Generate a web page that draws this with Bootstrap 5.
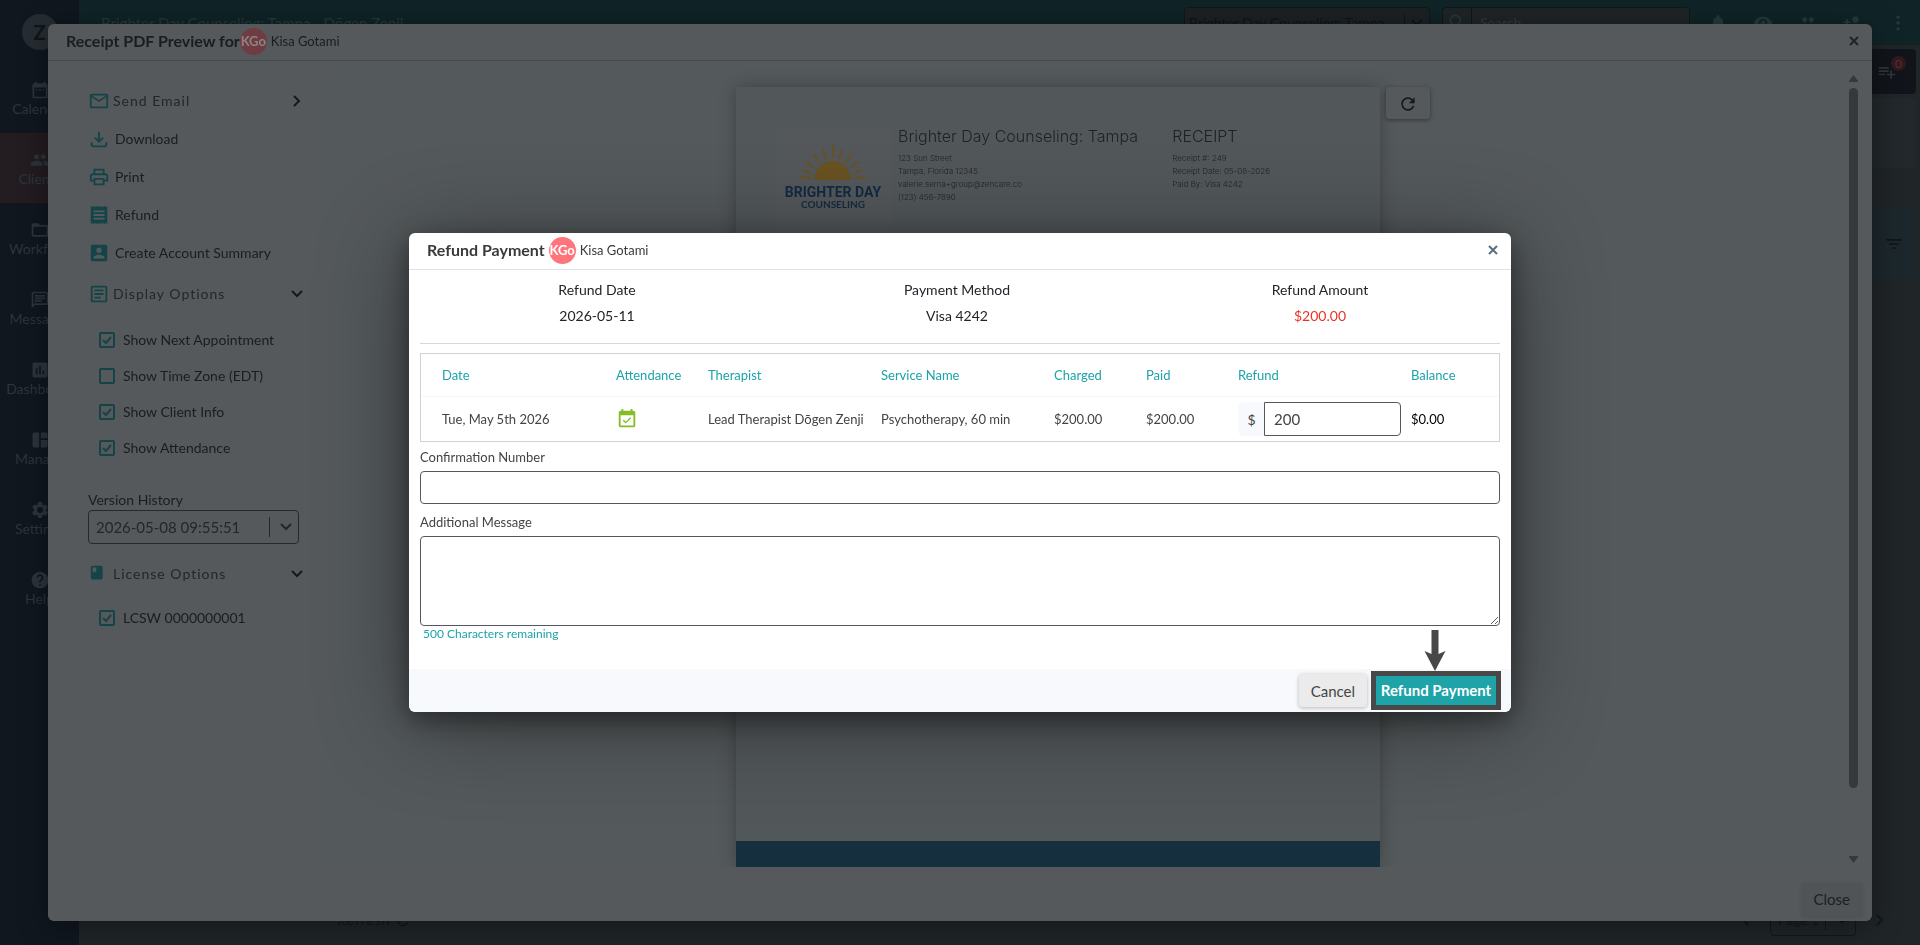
<!DOCTYPE html>
<html lang="en">
<head>
<meta charset="utf-8">
<meta name="viewport" content="width=device-width, initial-scale=1">
<title>Refund Payment</title>
<link href="https://cdn.jsdelivr.net/npm/bootstrap@5.3.0/dist/css/bootstrap.min.css" rel="stylesheet">
<style>
  :root { --teal: #1da3a8; --teal-dim: #144448; --ink: #191d20; }
  body { font-family: Lato, "Open Sans", sans-serif; font-size: 14px; line-height: 20px; background: #202528; color: #212529; overflow: hidden; }
  .ico { width: 20px; height: 20px; fill: currentColor; flex: none; }
  .ico-22 { width: 22px; height: 22px; }
  .ico-16 { width: 16px; height: 16px; }
  .ico-12 { width: 12px; height: 12px; }
  .spaced { letter-spacing: 1px; }

  /* application frame */
  .app-shell { height: 100vh; }
  .side-rail { width: 79px; background: #10171f; color: #2d353c; flex: none; }
  .rail-logo { width: 36px; height: 36px; background: #262d32; color: #0f1519; font: 700 20px/36px Lato, sans-serif; margin: 14px auto 13px; }
  .rail-item { height: 70px; padding-top: 17px; color: inherit; font-size: 14px; line-height: 18px; }
  .rail-item.current { background: #231c21; color: #2c353b; }
  .top-bar { height: 45px; background: #102427; color: #253a3d; padding: 0 12px 0 22px; }
  .top-title { font-size: 15px; }
  .top-select { width: 246px; height: 32px; background: #1c2224; border: 1px solid #11171a; color: #0e1416; font-size: 14px; padding: 0 4px; }
  .top-search { width: 248px; height: 32px; background: #1f2527; border: 1px solid #11171a; margin: 0 18px 0 4px; }
  .top-search input { background: none; border: 0; border-left: 1px solid #11171a; color: #343a3c; width: 0; }
  .top-search input::placeholder { color: #34393b; }
  .top-icons { gap: 25px; }
  .cart-bar { height: 45px; background: #11151b; color: #2f363a; border-radius: 4px; padding-right: 19px; }
  .count-dot { width: 15px; height: 15px; font-size: 12px; line-height: 15px; background: #35181d; color: #4d3438; top: -5px; left: 14px; }
  .blank-panel { height: 70px; background: #22282b; border-radius: 4px; }
  .filter-bar { height: 72px; background: #1c272c; color: #0f1518; padding-right: 12px; }
  .page-foot { padding: 0 28px 9px 258px; color: #11171a; }
  .page-box { width: 86px; height: 32px; border: 1px solid #11171a; }
  .page-box select { width: 54px; background: transparent; border: 0; color: #11171a; padding: 0 0 0 7px; appearance: none; }

  /* dialogs */
  .modal-content { border: 0; border-radius: 6px; }
  .modal-header { height: 37px; padding: 0 12px 2px 18px; }
  .modal-header h2 { font-size: 16px; line-height: 20px; }
  .face { width: 27px; height: 27px; line-height: 27px; font-size: 13px; font-weight: 700; background: #ff757c; color: #fff; text-align: center; }
  .who { font-size: 13px; }
  .x-btn { border: 0; background: none; color: #56707f; padding: 0; line-height: 0; }

  .preview-dialog { max-width: none; height: calc(100vh - 48px); margin: 24px 48px; }
  .preview-dialog .modal-content { height: 100%; background: #56595b; color: var(--ink); box-shadow: 0 4px 30px #0006; }
  .preview-dialog .modal-header { border-color: #474b4d; }
  .preview-dialog .face { background: #6f3d41; color: #8b8486; }
  .preview-dialog .x-btn { color: #1c262c; }
  .preview-dialog .modal-footer { height: 44px; background: #55595c; padding: 0 10px; border: 0; }
  .tools { width: 281px; padding: 21px 17px 0 40px; flex: none; }
  .tool-row { height: 38px; width: 100%; background: none; border: 0; padding: 0; color: inherit; text-decoration: none; gap: 5px; }
  .tool-row .ico { color: var(--teal-dim); }
  .tool-row.group { color: #22272a; padding-right: 7px; gap: 3px; }
  .tool-row.tall { height: 44px; }
  .tool-row .chev { color: #15191c; }
  .ticks { padding-top: 6px; }
  .tick-row { height: 36px; padding-left: 11px; gap: 8px; }
  .tick { appearance: none; width: 16px; height: 16px; margin: 0; border: 2px solid var(--teal-dim); border-radius: 2px; }
  .tick:checked { background: url("data:image/svg+xml,%3Csvg xmlns='http://www.w3.org/2000/svg' viewBox='0 0 12 12'%3E%3Cpath d='M2 6l3 3 5-6' fill='none' stroke='%23144448' stroke-width='2'/%3E%3C/svg%3E") center/12px no-repeat; }
  .version-box { border: 1px solid #25292d; border-radius: 4px; height: 34px; width: 211px; color: #22272a; }
  .version-box select { appearance: none; background: none; border: 0; color: #22272a; font-size: 15px; padding: 0 0 0 7px; width: 180px; }
  .bar-mark { width: 1px; height: 20px; background: #22272a; }
  .top-select .bar-mark, .page-box .bar-mark { background: #11171a; }
  .viewer { background: #54595b; margin: 8px 0 10px; min-width: 0; overflow: hidden; padding-top: 18px; gap: 6px; }
  .sheet { width: 644px; background: #525759; box-shadow: 0 0 16px #0004; color: #1d2226; font-family: Inter, sans-serif; }
  .sheet-head { padding: 39px 62px 0 40px; }
  .brand-box { width: 114px; height: 120px; background: #54585a; }
  .sheet h3 { font-size: 16px; line-height: 20px; font-weight: 300; margin: 0 0 6px; }
  .fine { font-size: 8px; line-height: 13px; font-weight: 300; }
  .sheet-foot { height: 26px; background: #162f3e; }
  .redo { width: 44px; height: 32px; border: 0; border-radius: 4px; background: #56595b; box-shadow: 0 1px 4px #0006; color: #15191c; padding: 0; }
  .scroll-rail { width: 9px; margin: 14px 14px 14px 12px; color: #35393c; }
  .scroll-rail .thumb { background: #35393c; border-radius: 5px; flex: 700; margin-top: 6px; }
  .scroll-rail .rest { flex: 68; }
  .grey-btn { height: 33px; border: 0; border-radius: 4px; padding: 0 12px; background: #ebebeb; color: #444; font-size: 15px; box-shadow: 0 1px 4px #0004; }
  .preview-dialog .grey-btn { background: #515456; color: #1c2023; box-shadow: 0 1px 4px #0002; }

  .refund-dialog { max-width: 1102px; }
  .refund-dialog .modal-content { box-shadow: 0 8px 24px #0006, 0 10px 90px #0006; }
  .refund-dialog .modal-header { border-color: #dee2e6; color: #3a3a3a; }
  .refund-dialog .modal-body { padding: 10px 11px 0; }
  .refund-dialog .modal-footer { height: 43px; padding: 0 10px; gap: 4px; background: #f8f9fc; border: 0; }
  .summary { border-bottom: 1px solid #d5d8dc; height: 64px; row-gap: 6px; margin-bottom: 9px; }
  .lead-in { padding-right: 6px; }
  .minus { color: #ea3323; }
  .lines { border: 1px solid #d0d3d3; table-layout: fixed; width: 100%; border-collapse: separate; border-spacing: 0; font-size: 13px; color: #444; }
  .lines th { height: 43px; color: var(--teal); font-weight: 400; border-bottom: 1px solid #f6f7f7; padding: 0; }
  .lines td { height: 44px; padding: 0; white-space: nowrap; }
  .lines th:first-child, .lines td:first-child { padding-left: 21px; }
  .c-date { width: 195px; } .c-slim { width: 92px; } .c-wide { width: 173px; } .c-last { width: 88px; }
  .kept { color: #86bc25; }
  .money { width: 163px; height: 34px; }
  .money .input-group-text { width: 27px; background: #f8f9fc; border: 0; padding: 0; justify-content: center; font-size: 14px; color: #444; }
  .money .form-control { border: 1px solid #57585f; border-radius: 0 4px 4px 0; font-size: 15px; color: #444; padding: 0 9px; }
  .form-label { font-size: 13px; line-height: 20px; margin: 5px 0 4px; color: #444; }
  .edge { border: 1px solid #57585f; border-radius: 4px; height: 33px; }
  textarea.edge { height: 90px; }
  .remain { font-size: 12px; line-height: 16px; color: var(--teal); padding-left: 3px; height: 43px; }
  .ring { border: 5px solid #484848; position: relative; }
  .ring .btn { height: 29px; width: 120px; border-radius: 0; background: var(--teal); color: #fff; font-size: 15px; font-weight: 700; padding: 0; line-height: 29px; border: 0; }
  .pointer { position: absolute; left: 50%; bottom: 100%; margin: 0 0 5px -12px; width: 22px; height: 41px; fill: #484848; }
</style>
</head>
<body>
<svg class="d-none" aria-hidden="true">
  <symbol id="i-cal" viewBox="0 0 24 24"><path d="M9 11H7v2h2v-2zm4 0h-2v2h2v-2zm4 0h-2v2h2v-2zm2-7h-1V2h-2v2H8V2H6v2H5c-1.11 0-1.99.9-1.99 2L3 20c0 1.1.89 2 2 2h14c1.1 0 2-.9 2-2V6c0-1.1-.9-2-2-2zm0 16H5V9h14v11z"/></symbol>
  <symbol id="i-people" viewBox="0 0 24 24"><path d="M16 11c1.66 0 2.99-1.34 2.99-3S17.66 5 16 5c-1.66 0-3 1.34-3 3s1.34 3 3 3zm-8 0c1.66 0 2.99-1.34 2.99-3S9.66 5 8 5C6.34 5 5 6.34 5 8s1.34 3 3 3zm0 2c-2.33 0-7 1.17-7 3.5V19h14v-2.5c0-2.33-4.67-3.5-7-3.5zm8 0c-.29 0-.62.02-.97.05 1.16.84 1.97 1.97 1.97 3.45V19h6v-2.5c0-2.33-4.67-3.5-7-3.5z"/></symbol>
  <symbol id="i-folder" viewBox="0 0 24 24"><path d="M20 6h-8l-2-2H4c-1.1 0-1.99.9-1.99 2L2 18c0 1.1.9 2 2 2h16c1.1 0 2-.9 2-2V8c0-1.1-.9-2-2-2zm0 12H4V8h16v10z"/></symbol>
  <symbol id="i-msg" viewBox="0 0 24 24"><path d="M4 4h16v12H5.17L4 17.17V4m0-2c-1.1 0-1.99.9-1.99 2L2 22l4-4h14c1.1 0 2-.9 2-2V4c0-1.1-.9-2-2-2H4zm2 10h8v2H6v-2zm0-3h12v2H6V9zm0-3h12v2H6V6z"/></symbol>
  <symbol id="i-chart" viewBox="0 0 24 24"><path d="M19 3H5c-1.1 0-2 .9-2 2v14c0 1.1.9 2 2 2h14c1.1 0 2-.9 2-2V5c0-1.1-.9-2-2-2zM9 17H7v-7h2v7zm4 0h-2V7h2v10zm4 0h-2v-4h2v4z"/></symbol>
  <symbol id="i-dash" viewBox="0 0 24 24"><path d="M11 21H5c-1.1 0-2-.9-2-2V5c0-1.1.9-2 2-2h6v18zm2 0h6c1.1 0 2-.9 2-2v-7h-8v9zm8-11V5c0-1.1-.9-2-2-2h-6v7h8z"/></symbol>
  <symbol id="i-gear" viewBox="0 0 24 24"><path d="M19.14 12.94c.04-.3.06-.61.06-.94 0-.32-.02-.64-.07-.94l2.03-1.58c.18-.14.23-.41.12-.61l-1.92-3.32c-.12-.22-.37-.29-.59-.22l-2.39.96c-.5-.38-1.03-.7-1.62-.94l-.36-2.54c-.04-.24-.24-.41-.48-.41h-3.84c-.24 0-.43.17-.47.41l-.36 2.54c-.59.24-1.13.57-1.62.94l-2.39-.96c-.22-.08-.47 0-.59.22L2.74 8.87c-.12.21-.08.47.12.61l2.03 1.58c-.05.3-.09.63-.09.94s.02.64.07.94l-2.03 1.58c-.18.14-.23.41-.12.61l1.92 3.32c.12.22.37.29.59.22l2.39-.96c.5.38 1.03.7 1.62.94l.36 2.54c.05.24.24.41.48.41h3.84c.24 0 .44-.17.47-.41l.36-2.54c.59-.24 1.13-.56 1.62-.94l2.39.96c.22.08.47 0 .59-.22l1.92-3.32c.12-.22.07-.47-.12-.61l-2.01-1.58zM12 15.6c-1.98 0-3.6-1.62-3.6-3.6s1.62-3.6 3.6-3.6 3.6 1.62 3.6 3.6-1.62 3.6-3.6 3.6z"/></symbol>
  <symbol id="i-help" viewBox="0 0 24 24"><path d="M12 2C6.48 2 2 6.48 2 12s4.48 10 10 10 10-4.48 10-10S17.52 2 12 2zm1 17h-2v-2h2v2zm2.07-7.75l-.9.92C13.45 12.9 13 13.5 13 15h-2v-.5c0-1.1.45-2.1 1.17-2.83l1.24-1.26c.37-.36.59-.86.59-1.41 0-1.1-.9-2-2-2s-2 .9-2 2H8c0-2.21 1.79-4 4-4s4 1.79 4 4c0 .88-.36 1.68-.93 2.25z"/></symbol>
  <symbol id="i-mail" viewBox="0 0 24 24"><path d="M22 6c0-1.1-.9-2-2-2H4c-1.1 0-2 .9-2 2v12c0 1.1.9 2 2 2h16c1.1 0 2-.9 2-2V6zm-2 0l-8 5-8-5h16zm0 12H4V8l8 5 8-5v10z"/></symbol>
  <symbol id="i-down" viewBox="0 0 24 24"><path d="M12 4v11M7.5 10.500L12 15l4.500-4.500M4 15.500V18a2 2 0 002 2h12a2 2 0 002-2v-2.500" fill="none" stroke="currentColor" stroke-width="2"/></symbol>
  <symbol id="i-print" viewBox="0 0 24 24"><path d="M19 8h-1V3H6v5H5c-1.660 0-3 1.340-3 3v6h4v4h12v-4h4v-6c0-1.660-1.340-3-3-3zM8 5h8v3H8V5zm8 12v2H8v-4h8v2zm2-2v-2H6v2H4v-4c0-.55.45-1 1-1h14c.55 0 1 .45 1 1v4h-2z"/></symbol>
  <symbol id="i-receipt" viewBox="0 0 24 24"><path d="M18 17H6v-2h12v2zm0-4H6v-2h12v2zm0-4H6V7h12v2zM3 22l1.500-1.500L6 22l1.500-1.500L9 22l1.500-1.500L12 22l1.500-1.500L15 22l1.500-1.500L18 22l1.500-1.500L21 22V2l-1.500 1.500L18 2l-1.500 1.500L15 2l-1.500 1.500L12 2l-1.500 1.500L9 2 7.500 3.500 6 2 4.500 3.500 3 2v20z"/></symbol>
  <symbol id="i-account" viewBox="0 0 24 24"><path d="M3 5v14c0 1.100.89 2 2 2h14c1.100 0 2-.9 2-2V5c0-1.100-.9-2-2-2H5c-1.110 0-2 .9-2 2zm12 4c0 1.660-1.340 3-3 3s-3-1.340-3-3 1.340-3 3-3 3 1.340 3 3zm-9 8c0-2 4-3.100 6-3.100s6 1.100 6 3.100v1H6v-1z"/></symbol>
  <symbol id="i-article" viewBox="0 0 24 24"><path d="M19 5v14H5V5h14m0-2H5c-1.100 0-2 .9-2 2v14c0 1.100.9 2 2 2h14c1.100 0 2-.9 2-2V5c0-1.100-.9-2-2-2zM14 17H7v-2h7v2zm3-4H7v-2h10v2zm0-4H7V7h10v2z"/></symbol>
  <symbol id="i-book" viewBox="0 0 24 24"><path fill-rule="evenodd" d="M14 3H5a2 2 0 00-2 2v11a2 2 0 002 2h9a2 2 0 002-2V5a2 2 0 00-2-2zM5 5h4v6l-2-2-2 2z"/></symbol>
  <symbol id="i-cart" viewBox="0 0 24 24"><path d="M14 10H2v2h12v-2zm0-4H2v2h12V6zm4 8v-4h-2v4h-4v2h4v4h2v-4h4v-2h-4zM2 16h8v-2H2v2z"/></symbol>
  <symbol id="i-filter" viewBox="0 0 24 24"><path d="M10 18h4v-2h-4v2zM3 6v2h18V6H3zm3 7h12v-2H6v2z"/></symbol>
  <symbol id="i-redo" viewBox="0 0 24 24"><path d="M17.650 6.350C16.200 4.900 14.210 4 12 4c-4.420 0-7.990 3.580-7.990 8s3.570 8 7.990 8c3.730 0 6.840-2.550 7.730-6h-2.080c-.82 2.330-3.040 4-5.650 4-3.310 0-6-2.690-6-6s2.690-6 6-6c1.660 0 3.140.69 4.220 1.780L13 11h7V4l-2.350 2.350z"/></symbol>
  <symbol id="i-eye" viewBox="0 0 24 24"><path d="M12 4.500C7 4.500 2.730 7.610 1 12c1.730 4.390 6 7.500 11 7.500s9.270-3.110 11-7.500c-1.730-4.390-6-7.500-11-7.500zM12 17c-2.760 0-5-2.240-5-5s2.240-5 5-5 5 2.240 5 5-2.240 5-5 5zm0-8c-1.660 0-3 1.340-3 3s1.340 3 3 3 3-1.340 3-3-1.340-3-3-3z"/></symbol>
  <symbol id="i-bell" viewBox="0 0 24 24"><path d="M12 22c1.100 0 2-.9 2-2h-4c0 1.100.89 2 2 2zm6-6v-5c0-3.070-1.640-5.640-4.500-6.320V4c0-.83-.67-1.500-1.500-1.500s-1.500.67-1.500 1.500v.68C7.630 5.360 6 7.920 6 11v5l-2 2v1h16v-1l-2-2z"/></symbol>
  <symbol id="i-add" viewBox="0 0 24 24"><path d="M15 12c2.210 0 4-1.790 4-4s-1.790-4-4-4-4 1.790-4 4 1.790 4 4 4zm-9-2V7H4v3H1v2h3v3h2v-3h3v-2H6zm9 4c-2.670 0-8 1.340-8 4v2h16v-2c0-2.660-5.330-4-8-4z"/></symbol>
  <symbol id="i-dots" viewBox="0 0 24 24"><circle cx="12" cy="5" r="2"/><circle cx="12" cy="12" r="2"/><circle cx="12" cy="19" r="2"/></symbol>
  <symbol id="i-search" viewBox="0 0 24 24"><path d="M10 4a6 6 0 100 12 6 6 0 000-12zM15 15l6 6" fill="none" stroke="currentColor" stroke-width="2"/></symbol>
  <symbol id="i-done" viewBox="0 0 24 24"><path d="M16.530 11.060L15.470 10l-4.880 4.880-2.120-2.120-1.060 1.060L10.590 17l5.940-5.940zM19 3h-1V1h-2v2H8V1H6v2H5c-1.110 0-1.990.9-1.990 2L3 19c0 1.100.89 2 2 2h14c1.100 0 2-.9 2-2V5c0-1.100-.9-2-2-2zm0 16H5V8h14v11z"/></symbol>
  <symbol id="i-chev-d" viewBox="0 0 16 16"><path d="M3.500 5.500L8 10l4.500-4.500" fill="none" stroke="currentColor" stroke-width="2" stroke-linecap="round"/></symbol>
  <symbol id="i-chev-r" viewBox="0 0 16 16"><path d="M5.500 3.500L10 8l-4.500 4.500" fill="none" stroke="currentColor" stroke-width="2" stroke-linecap="round"/></symbol>
  <symbol id="i-chev-l" viewBox="0 0 16 16"><path d="M10 3.500L5.500 8l4.500 4.500" fill="none" stroke="currentColor" stroke-width="2" stroke-linecap="round"/></symbol>
  <symbol id="i-x" viewBox="0 0 12 12"><path d="M2 2l8 8M10 2l-8 8" fill="none" stroke="currentColor" stroke-width="2"/></symbol>
</svg>

<div class="app-shell d-flex">
  <nav class="side-rail text-center">
    <div class="rail-logo rounded-circle">Z</div>
    <a href="#" class="rail-item d-flex flex-column align-items-center text-decoration-none"><svg class="ico"><use href="#i-cal"/></svg>Calendar</a>
    <a href="#" class="rail-item current d-flex flex-column align-items-center text-decoration-none"><svg class="ico"><use href="#i-people"/></svg>Clients</a>
    <a href="#" class="rail-item d-flex flex-column align-items-center text-decoration-none"><svg class="ico"><use href="#i-folder"/></svg>Workflow</a>
    <a href="#" class="rail-item d-flex flex-column align-items-center text-decoration-none"><svg class="ico"><use href="#i-msg"/></svg>Messages</a>
    <a href="#" class="rail-item d-flex flex-column align-items-center text-decoration-none"><svg class="ico"><use href="#i-chart"/></svg>Dashboard</a>
    <a href="#" class="rail-item d-flex flex-column align-items-center text-decoration-none"><svg class="ico"><use href="#i-dash"/></svg>Manage</a>
    <a href="#" class="rail-item d-flex flex-column align-items-center text-decoration-none"><svg class="ico"><use href="#i-gear"/></svg>Settings</a>
    <a href="#" class="rail-item d-flex flex-column align-items-center text-decoration-none"><svg class="ico"><use href="#i-help"/></svg>Help</a>
  </nav>
  <div class="flex-grow-1 d-flex flex-column">
    <header class="top-bar d-flex align-items-center">
      <div class="top-title me-auto">Brighter Day Counseling: Tampa - Dōgen Zenji</div>
      <div class="top-select d-flex align-items-center rounded-1 me-2"><span class="me-auto">Brighter Day Counseling: Tampa</span><span class="bar-mark me-1"></span><svg class="ico ico-16"><use href="#i-chev-d"/></svg></div>
      <div class="top-search d-flex align-items-stretch rounded-1"><svg class="ico ms-1 me-1 mt-1"><use href="#i-search"/></svg><input class="flex-grow-1 px-2" type="text" placeholder="Search" aria-label="Search"></div>
      <div class="top-icons d-flex">
        <svg class="ico"><use href="#i-bell"/></svg><svg class="ico"><use href="#i-eye"/></svg><svg class="ico"><use href="#i-people"/></svg><svg class="ico"><use href="#i-add"/></svg><svg class="ico"><use href="#i-dots"/></svg>
      </div>
    </header>
    <main class="flex-grow-1 d-flex flex-column pe-1 pt-1">
      <div class="cart-bar d-flex align-items-center justify-content-end mb-1"><span class="position-relative"><svg class="ico"><use href="#i-cart"/></svg><span class="count-dot rounded-circle position-absolute text-center">0</span></span></div>
      <div class="blank-panel mb-4"></div>
      <div class="filter-bar d-flex align-items-center justify-content-end mt-3"><svg class="ico"><use href="#i-filter"/></svg></div>
      <div class="page-foot d-flex align-items-center mt-auto">
        <span class="spaced me-auto">Refresh <svg class="ico ico-16"><use href="#i-redo"/></svg></span>
        <svg class="ico ico-16 me-3"><use href="#i-chev-l"/></svg>
        <div class="page-box rounded-1 d-flex align-items-center"><select aria-label="Page"><option>Page 1</option></select><span class="bar-mark me-1"></span><svg class="ico ico-16 ms-1"><use href="#i-chev-d"/></svg></div>
        <svg class="ico ico-16 ms-3"><use href="#i-chev-r"/></svg>
      </div>
    </main>
  </div>
</div>

<div class="modal d-block">
  <div class="modal-dialog preview-dialog">
    <div class="modal-content overflow-hidden">
      <div class="modal-header">
        <h2 class="m-0 fw-bold">Receipt PDF Preview for</h2>
        <span class="face rounded-circle me-1">KGo</span><span class="who me-auto">Kisa Gotami</span>
        <button class="x-btn" aria-label="Close preview"><svg class="ico ico-12"><use href="#i-x"/></svg></button>
      </div>
      <div class="modal-body p-0 d-flex overflow-hidden">
        <div class="tools">
          <button class="tool-row group d-flex align-items-center"><svg class="ico ico-22"><use href="#i-mail"/></svg><span class="spaced me-auto">Send Email</span><svg class="ico ico-16 chev"><use href="#i-chev-r"/></svg></button>
          <a href="#" class="tool-row d-flex align-items-center"><svg class="ico ico-22"><use href="#i-down"/></svg>Download</a>
          <a href="#" class="tool-row d-flex align-items-center"><svg class="ico ico-22"><use href="#i-print"/></svg>Print</a>
          <a href="#" class="tool-row d-flex align-items-center"><svg class="ico ico-22"><use href="#i-receipt"/></svg>Refund</a>
          <a href="#" class="tool-row d-flex align-items-center"><svg class="ico ico-22"><use href="#i-account"/></svg>Create Account Summary</a>
          <button class="tool-row group tall d-flex align-items-center"><svg class="ico ico-22"><use href="#i-article"/></svg><span class="spaced me-auto">Display Options</span><svg class="ico ico-16 chev"><use href="#i-chev-d"/></svg></button>
          <div class="ticks">
            <label class="tick-row d-flex align-items-center"><input class="tick" type="checkbox" checked>Show Next Appointment</label>
            <label class="tick-row d-flex align-items-center"><input class="tick" type="checkbox">Show Time Zone (EDT)</label>
            <label class="tick-row d-flex align-items-center"><input class="tick" type="checkbox" checked>Show Client Info</label>
            <label class="tick-row d-flex align-items-center"><input class="tick" type="checkbox" checked>Show Attendance</label>
          </div>
          <label for="version" class="d-block mt-4">Version History</label>
          <div class="version-box d-flex align-items-center">
            <select id="version"><option>2026-05-08 09:55:51</option></select><span class="bar-mark"></span><svg class="ico ico-16 ms-2"><use href="#i-chev-d"/></svg>
          </div>
          <button class="tool-row group tall d-flex align-items-center mt-2"><svg class="ico ico-22"><use href="#i-book"/></svg><span class="spaced me-auto">License Options</span><svg class="ico ico-16 chev"><use href="#i-chev-d"/></svg></button>
          <label class="tick-row d-flex align-items-center mt-1"><input class="tick" type="checkbox" checked>LCSW 0000000001</label>
        </div>
        <div class="viewer flex-grow-1 d-flex justify-content-center">
          <div class="sheet d-flex flex-column justify-content-between">
            <div class="sheet-head d-flex">
              <svg class="brand-box" viewBox="0 0 114 120" role="img" aria-label="Brighter Day Counseling">
                <path d="M38 54a18.500 19 0 0137 0z" fill="#695222"/>
                <path d="M57 20v11M47 24l3 8M66 24l-3 8M38 29l5 7M75 29l-5 7M31 36l6 5M82 36l-6 5M27 44l7 3M86 44l-7 3M25 51l9 1M89 51l-9 1" stroke="#695222" stroke-width="2" stroke-linecap="round"/>
                <text x="57" y="71" text-anchor="middle" font-family="Liberation Sans Narrow, Roboto, sans-serif" font-weight="700" font-size="14" fill="#122a42">BRIGHTER DAY</text>
                <text x="57" y="82" text-anchor="middle" font-family="Lato, sans-serif" font-weight="700" font-size="10" fill="#122a42">COUNSELING</text>
              </svg>
              <div class="ms-2">
                <h3>Brighter Day Counseling: Tampa</h3>
                <div class="fine">123 Sun Street<br>Tampa, Florida 12345<br>valerie.serna+group@zencare.co<br>(123) 456-7890</div>
              </div>
              <div class="ms-auto pe-5">
                <h3>RECEIPT</h3>
                <div class="fine">Receipt #: 249<br>Receipt Date: 05-08-2026<br>Paid By: Visa 4242</div>
              </div>
            </div>
            <div class="sheet-foot"></div>
          </div>
          <button class="redo" aria-label="Refresh preview"><svg class="ico"><use href="#i-redo"/></svg></button>
        </div>
        <div class="scroll-rail d-flex flex-column">
          <svg width="9" height="7" fill="currentColor"><path d="M4.500 0L9 6v1H0V6z"/></svg>
          <div class="thumb"></div><div class="rest"></div>
          <svg width="9" height="7" fill="currentColor"><path d="M4.500 7L9 1V0H0v1z"/></svg>
        </div>
      </div>
      <div class="modal-footer"><button class="grey-btn m-0">Close</button></div>
    </div>
  </div>
</div>

<div class="modal d-block">
  <div class="modal-dialog modal-dialog-centered refund-dialog">
    <div class="modal-content overflow-hidden">
      <div class="modal-header">
        <h2 class="m-0 fw-bold me-1">Refund Payment</h2>
        <span class="face rounded-circle me-1">KGo</span><span class="who me-auto">Kisa Gotami</span>
        <button class="x-btn" aria-label="Close"><svg class="ico ico-12"><use href="#i-x"/></svg></button>
      </div>
      <div class="modal-body">
        <div class="summary row gx-0 text-center align-content-start">
          <div class="col-4 lead-in">Refund Date</div><div class="col-4 lead-in">Payment Method</div><div class="col-4">Refund Amount</div>
          <div class="col-4 lead-in">2026-05-11</div><div class="col-4 lead-in">Visa 4242</div><div class="col-4 minus">$200.00</div>
        </div>
        <table class="lines">
          <colgroup><col class="c-date"><col class="c-slim"><col class="c-wide"><col class="c-wide"><col class="c-slim"><col class="c-slim"><col class="c-wide"><col class="c-last"></colgroup>
          <thead><tr><th>Date</th><th>Attendance</th><th>Therapist</th><th>Service Name</th><th>Charged</th><th>Paid</th><th>Refund</th><th>Balance</th></tr></thead>
          <tbody><tr>
            <td>Tue, May 5th 2026</td><td><svg class="ico ico-22 kept"><use href="#i-done"/></svg></td><td>Lead Therapist Dōgen Zenji</td><td>Psychotherapy, 60 min</td><td>$200.00</td><td>$200.00</td>
            <td><div class="input-group flex-nowrap money"><label class="input-group-text" for="amount">$</label><input id="amount" class="form-control" type="text" value="200"></div></td>
            <td class="text-black">$0.00</td>
          </tr></tbody>
        </table>
        <label class="form-label d-block" for="confirm">Confirmation Number</label>
        <input id="confirm" type="text" class="edge w-100 d-block">
        <label class="form-label d-block mt-2" for="note">Additional Message</label>
        <textarea id="note" class="edge w-100 d-block"></textarea>
        <div class="remain">500 Characters remaining</div>
      </div>
      <div class="modal-footer">
        <button class="grey-btn m-0">Cancel</button>
        <div class="ring m-0"><button class="btn d-block">Refund Payment</button>
          <svg class="pointer" viewBox="0 0 22 41"><path d="M7.500 0h7v24l7-3L11 41 .5 21l7 3z"/></svg>
        </div>
      </div>
    </div>
  </div>
</div>
<script src="https://cdn.jsdelivr.net/npm/bootstrap@5.3.0/dist/js/bootstrap.bundle.min.js"></script>
</body>
</html>
